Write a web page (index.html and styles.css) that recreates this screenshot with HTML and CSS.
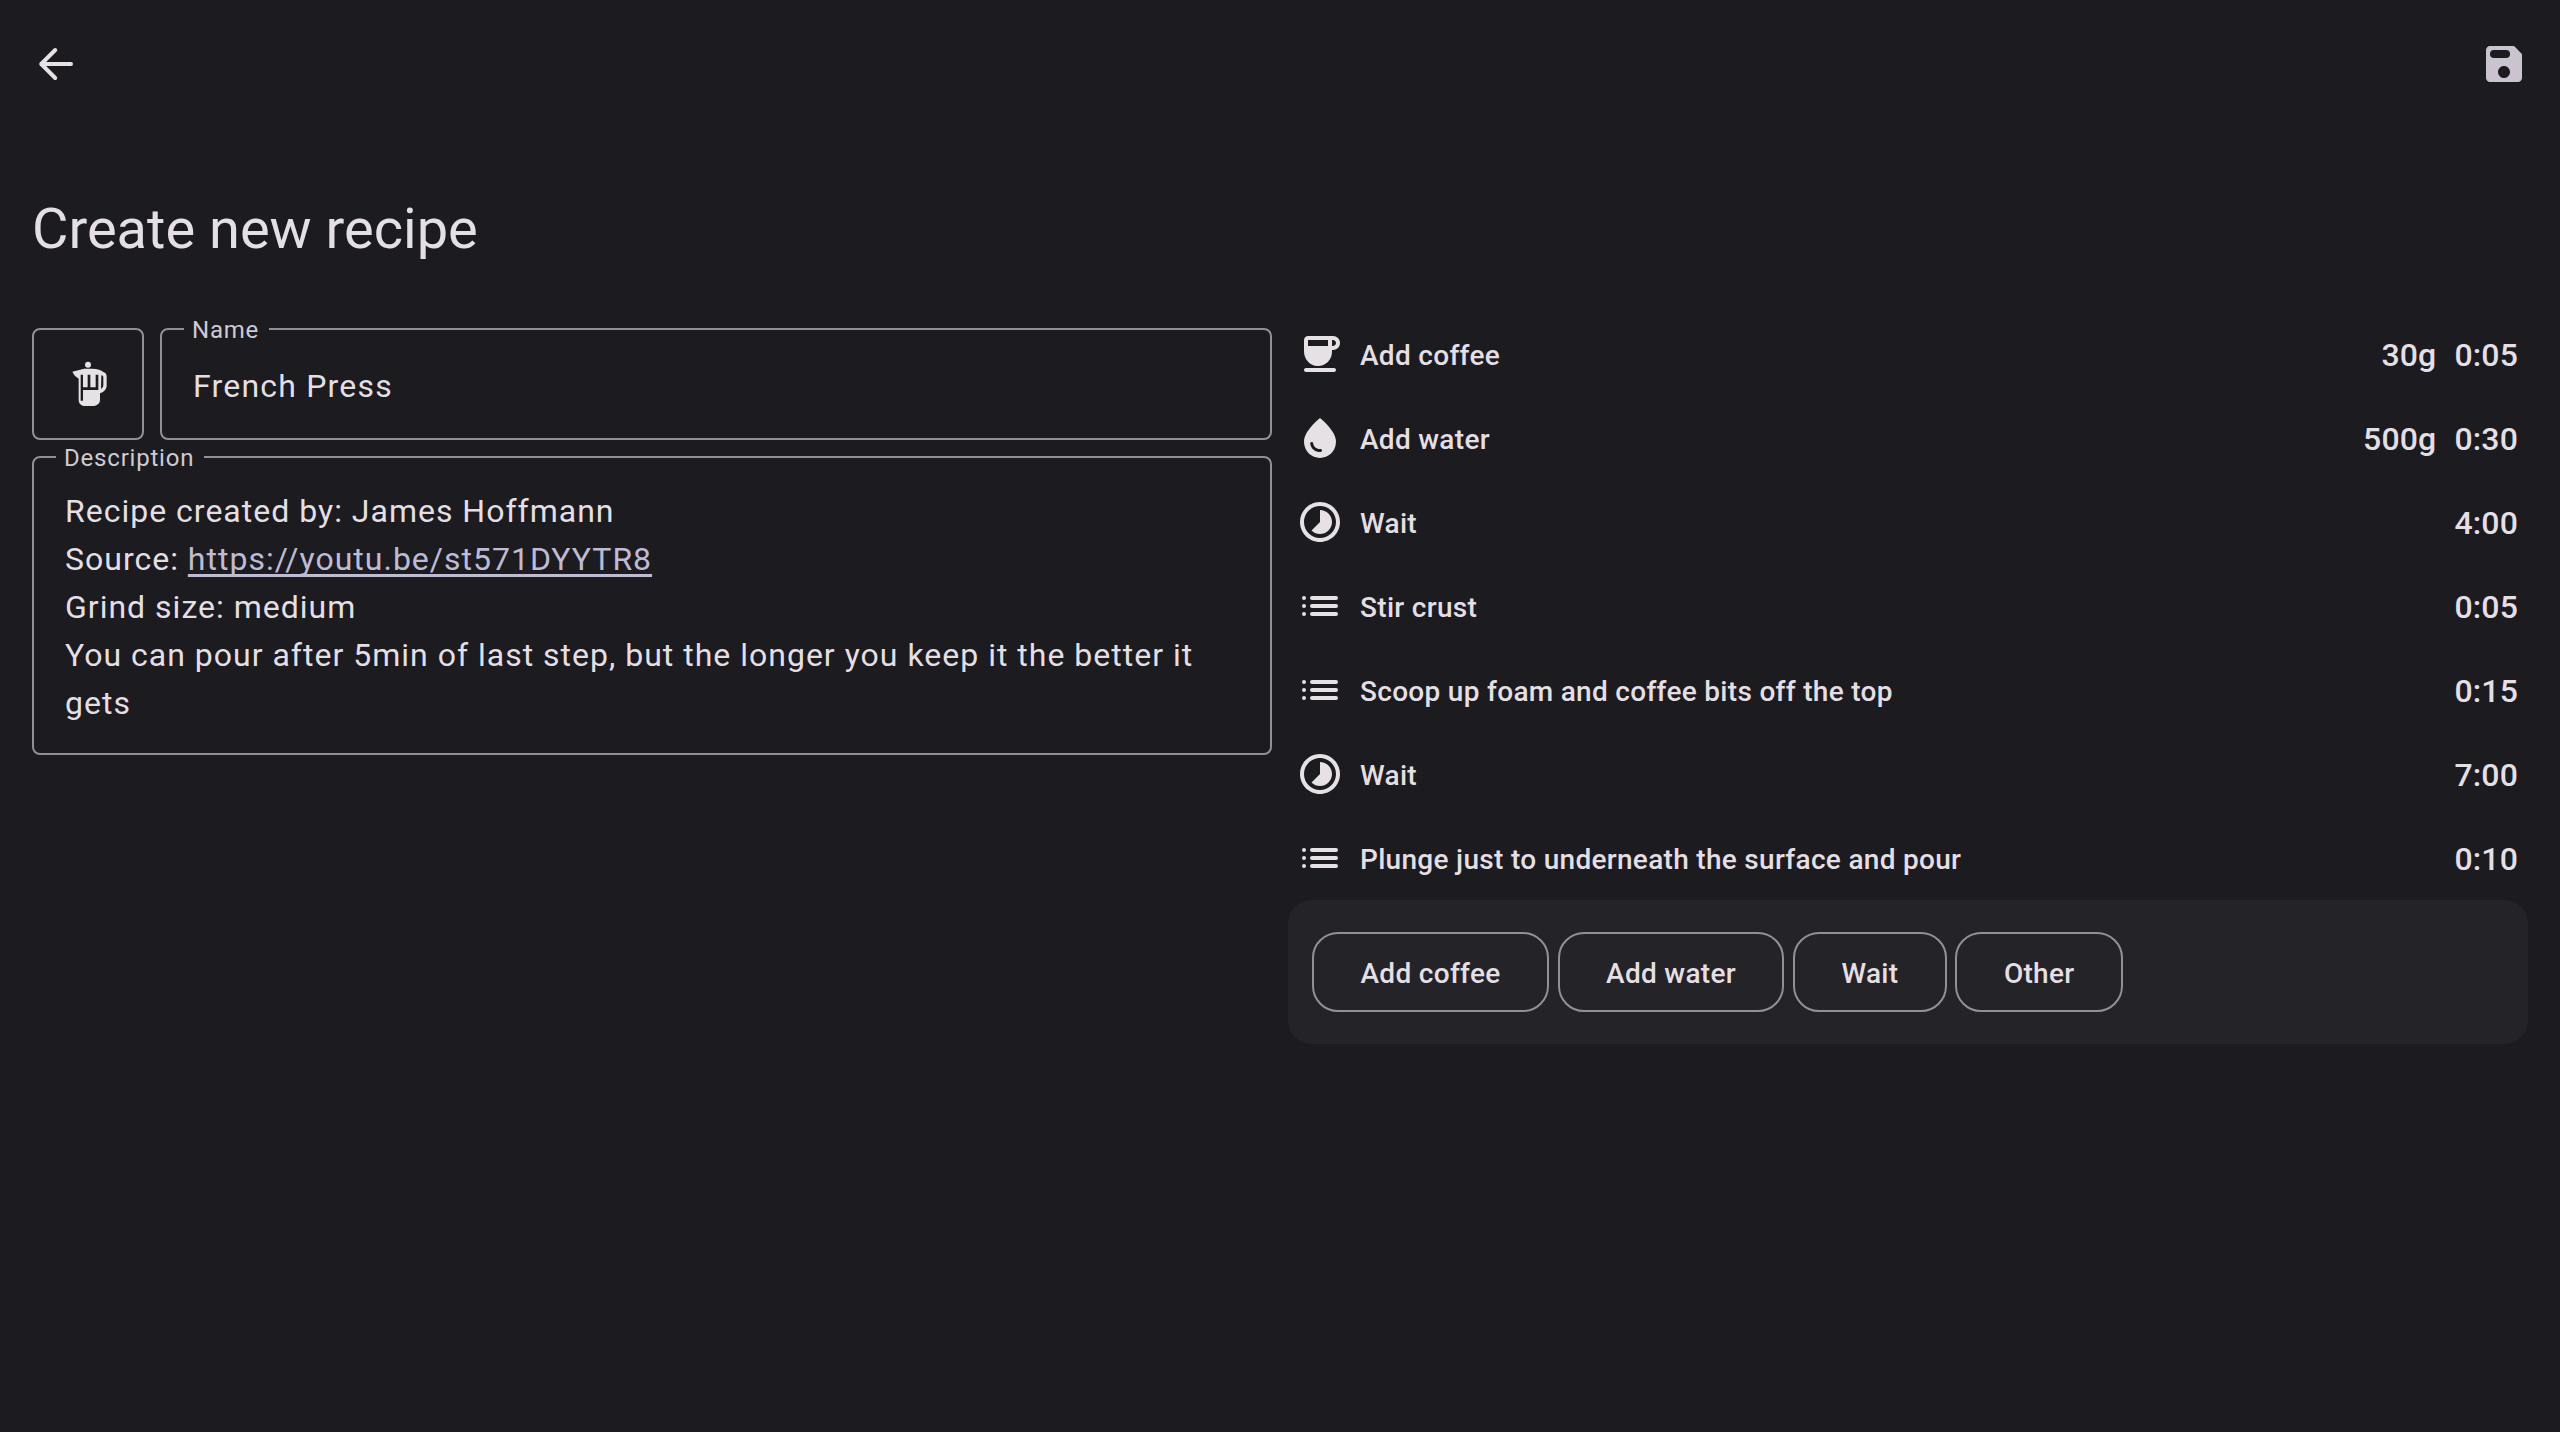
FILE: index.html
```html
<!DOCTYPE html>
<html lang="en">
<head>
<meta charset="utf-8">
<title>Create new recipe</title>
<link rel="stylesheet" href="styles.css">
</head>
<body>
<div class="page">
  <header class="topbar">
    <svg class="icon" viewBox="0 0 24 24"><path class="arrow" d="M19.5 12H5M11.6 5l-7 7 7 7"/></svg>
    <svg class="icon save" viewBox="0 0 24 24"><path fill-rule="evenodd" d="M5 3h11.6c.27 0 .52.1.7.29l3.41 3.41c.19.18.29.43.29.7V19c0 1.1-.9 2-2 2H5c-1.1 0-2-.9-2-2V5c0-1.1.9-2 2-2zm2 2a2 2 0 0 0 0 4h6a2 2 0 0 0 0-4H7zM12 19c1.66 0 3-1.34 3-3s-1.34-3-3-3-3 1.34-3 3 1.34 3 3 3z"/></svg>
  </header>
  <h1 class="title">Create new recipe</h1>
  <main class="columns">
    <section class="form">
      <div class="top-row">
        <div class="icon-box">
          <svg class="pot" viewBox="0 3 144 162"><circle cx="72" cy="26" r="9"/><path fill-rule="evenodd" d="M25 47L60 38H85C100 38 112 42 118 48C125 50 128 55 128 62V88C128 100 120 108 108 112V132C108 143 98 150 88 150H62C52 150 44 143 44 132V68C38 64 30 58 25 47ZM112 58C116 58 118 60 118 64V86C118 92 115 96 111 98ZM50 56h7v38h14v-38h8v38h16v-38h8v46h-46v32h-7z"/></svg>
        </div>
        <div class="field name-field">
          <span class="field-label">Name</span>
          <span class="field-value">French Press</span>
        </div>
      </div>
      <div class="field desc-field">
        <span class="field-label">Description</span>
        <div class="desc-text">
          Recipe created by: James Hoffmann<br>
          Source: <a class="link" href="#">https://youtu.be/st571DYYTR8</a><br>
          Grind size: medium<br>
          You can pour after 5min of last step, but the longer you keep it the better it gets
        </div>
      </div>
    </section>
    <section class="steps">
      <div class="step">
        <svg class="icon" viewBox="0 0 24 24"><path fill-rule="evenodd" d="M18.5 3H6c-1.1 0-2 .9-2 2v5.71c0 3.83 2.95 7.18 6.78 7.29 3.96.12 7.22-3.06 7.22-7v-1h.5c1.93 0 3.5-1.57 3.5-3.5S20.43 3 18.5 3zM16 5v3H6V5h10zm2.5 3H18V5h.5c.83 0 1.5.67 1.5 1.5S19.33 8 18.5 8zM5 19h14c.55 0 1 .45 1 1s-.45 1-1 1H5c-.55 0-1-.45-1-1s.45-1 1-1z"/></svg>
        <span class="step-name">Add coffee</span><span class="step-value">30g</span><span class="step-value">0:05</span>
      </div>
      <div class="step">
        <svg class="icon" viewBox="0 0 24 24"><path fill-rule="evenodd" d="M12 2c-5.33 4.55-8 8.48-8 11.8 0 4.98 3.8 8.2 8 8.2s8-3.22 8-8.2c0-3.32-2.67-7.25-8-11.8zM7.83 14c.37 0 .67.26.74.62.41 2.22 2.28 2.98 3.64 2.87.43-.02.79.32.79.75 0 .4-.32.73-.72.75-2.13.13-4.62-1.09-5.19-4.12-.08-.45.28-.87.74-.87z"/></svg>
        <span class="step-name">Add water</span><span class="step-value">500g</span><span class="step-value">0:30</span>
      </div>
      <div class="step">
        <svg class="icon" viewBox="0 0 24 24"><path d="M16.24 7.76C15.07 6.59 13.54 6 12 6v6l-4.24 4.24c2.34 2.34 6.14 2.34 8.49 0 2.34-2.34 2.34-6.14-.01-8.48zM12 2C6.48 2 2 6.48 2 12s4.48 10 10 10 10-4.48 10-10S17.52 2 12 2zm0 18c-4.42 0-8-3.58-8-8s3.58-8 8-8 8 3.58 8 8-3.58 8-8 8z"/></svg>
        <span class="step-name">Wait</span><span class="step-value">4:00</span>
      </div>
      <div class="step">
        <svg class="icon" viewBox="0 0 24 24"><circle cx="4" cy="8" r="1"/><circle cx="4" cy="12" r="1"/><circle cx="4" cy="16" r="1"/><rect x="7" y="7" width="14" height="2" rx="1"/><rect x="7" y="11" width="14" height="2" rx="1"/><rect x="7" y="15" width="14" height="2" rx="1"/></svg>
        <span class="step-name">Stir crust</span><span class="step-value">0:05</span>
      </div>
      <div class="step">
        <svg class="icon" viewBox="0 0 24 24"><circle cx="4" cy="8" r="1"/><circle cx="4" cy="12" r="1"/><circle cx="4" cy="16" r="1"/><rect x="7" y="7" width="14" height="2" rx="1"/><rect x="7" y="11" width="14" height="2" rx="1"/><rect x="7" y="15" width="14" height="2" rx="1"/></svg>
        <span class="step-name">Scoop up foam and coffee bits off the top</span><span class="step-value">0:15</span>
      </div>
      <div class="step">
        <svg class="icon" viewBox="0 0 24 24"><path d="M16.24 7.76C15.07 6.59 13.54 6 12 6v6l-4.24 4.24c2.34 2.34 6.14 2.34 8.49 0 2.34-2.34 2.34-6.14-.01-8.48zM12 2C6.48 2 2 6.48 2 12s4.48 10 10 10 10-4.48 10-10S17.52 2 12 2zm0 18c-4.42 0-8-3.58-8-8s3.58-8 8-8 8 3.58 8 8-3.58 8-8 8z"/></svg>
        <span class="step-name">Wait</span><span class="step-value">7:00</span>
      </div>
      <div class="step">
        <svg class="icon" viewBox="0 0 24 24"><circle cx="4" cy="8" r="1"/><circle cx="4" cy="12" r="1"/><circle cx="4" cy="16" r="1"/><rect x="7" y="7" width="14" height="2" rx="1"/><rect x="7" y="11" width="14" height="2" rx="1"/><rect x="7" y="15" width="14" height="2" rx="1"/></svg>
        <span class="step-name">Plunge just to underneath the surface and pour</span><span class="step-value">0:10</span>
      </div>
      <div class="panel">
        <button class="chip">Add coffee</button>
        <button class="chip">Add water</button>
        <button class="chip">Wait</button>
        <button class="chip">Other</button>
      </div>
    </section>
  </main>
</div>
</body>
</html>
```

FILE: styles.css
```css
* { box-sizing: border-box; }
html, body { margin: 0; padding: 0; }
body {
  background: #1b1b20;
  color: #e4dfe4;
  font-family: Roboto, "Liberation Sans", sans-serif;
}
.page { width: 2560px; height: 1432px; overflow: hidden; }
.topbar {
  display: flex;
  justify-content: space-between;
  padding: 40px 32px 0;
}
.icon { width: 48px; height: 48px; flex: none; fill: #e6e1e5; display: block; }
.arrow { fill: none; stroke: #e6e1e5; stroke-width: 2; stroke-linecap: round; stroke-linejoin: round; }
.save { fill: #cac4d0; }
.title {
  margin: 105px 0 0 32px;
  font-size: 56px;
  line-height: 72px;
  font-weight: 400;
  letter-spacing: 0;
}
.columns {
  display: grid;
  grid-template-columns: 1240px 1240px;
  column-gap: 16px;
  margin: 47px 0 0 32px;
}
.form { padding-top: 16px; }
.top-row { display: flex; gap: 16px; height: 112px; }
.icon-box {
  width: 112px;
  border: 2px solid #938f99;
  border-radius: 8px;
  display: flex;
  align-items: center;
  justify-content: center;
}
.pot { width: 48px; height: 54px; fill: #e6e1e5; display: block; }
.field {
  position: relative;
  border: 2px solid #938f99;
  border-radius: 8px;
}
.name-field { flex: 1; display: flex; align-items: center; padding: 4px 30px 0 31px; }
.field-value { font-size: 32px; letter-spacing: 1.2px; line-height: 48px; }
.field-label {
  position: absolute;
  top: -16px;
  left: 22px;
  padding: 0 10px 0 8px;
  background: #1b1b20;
  color: #d0cad5;
  font-size: 24px;
  line-height: 32px;
  letter-spacing: 0.8px;
}
.desc-field { margin-top: 16px; height: 299px; padding: 29px 30px 0 31px; }
.desc-field .field-label { left: 22px; }
.desc-text { font-size: 32px; line-height: 48px; letter-spacing: 1px; }
.link {
  color: #c0bbd4;
  text-decoration: underline;
  text-decoration-skip-ink: none;
  text-underline-offset: 4px;
}
.step {
  display: flex;
  align-items: center;
  height: 84px;
  padding: 0 10px 0 8px;
  gap: 16px;
}
.step-name { flex: 1; padding-top: 2px; font-size: 28px; font-weight: 500; letter-spacing: 0.3px; }
.step-value { padding-top: 2px; margin-left: 2px; font-size: 32px; font-weight: 500; letter-spacing: 0.15px; }
.panel {
  display: flex;
  gap: 8.5px;
  padding: 32px 24px;
  background: #232328;
  border-radius: 24px;
}
.chip {
  height: 80px;
  padding: 2px 46.5px 0;
  background: transparent;
  border: 2px solid #938f99;
  border-radius: 26px;
  color: #e4dfe4;
  font-family: inherit;
  font-size: 28px;
  font-weight: 500;
  letter-spacing: 0.3px;
}
```
